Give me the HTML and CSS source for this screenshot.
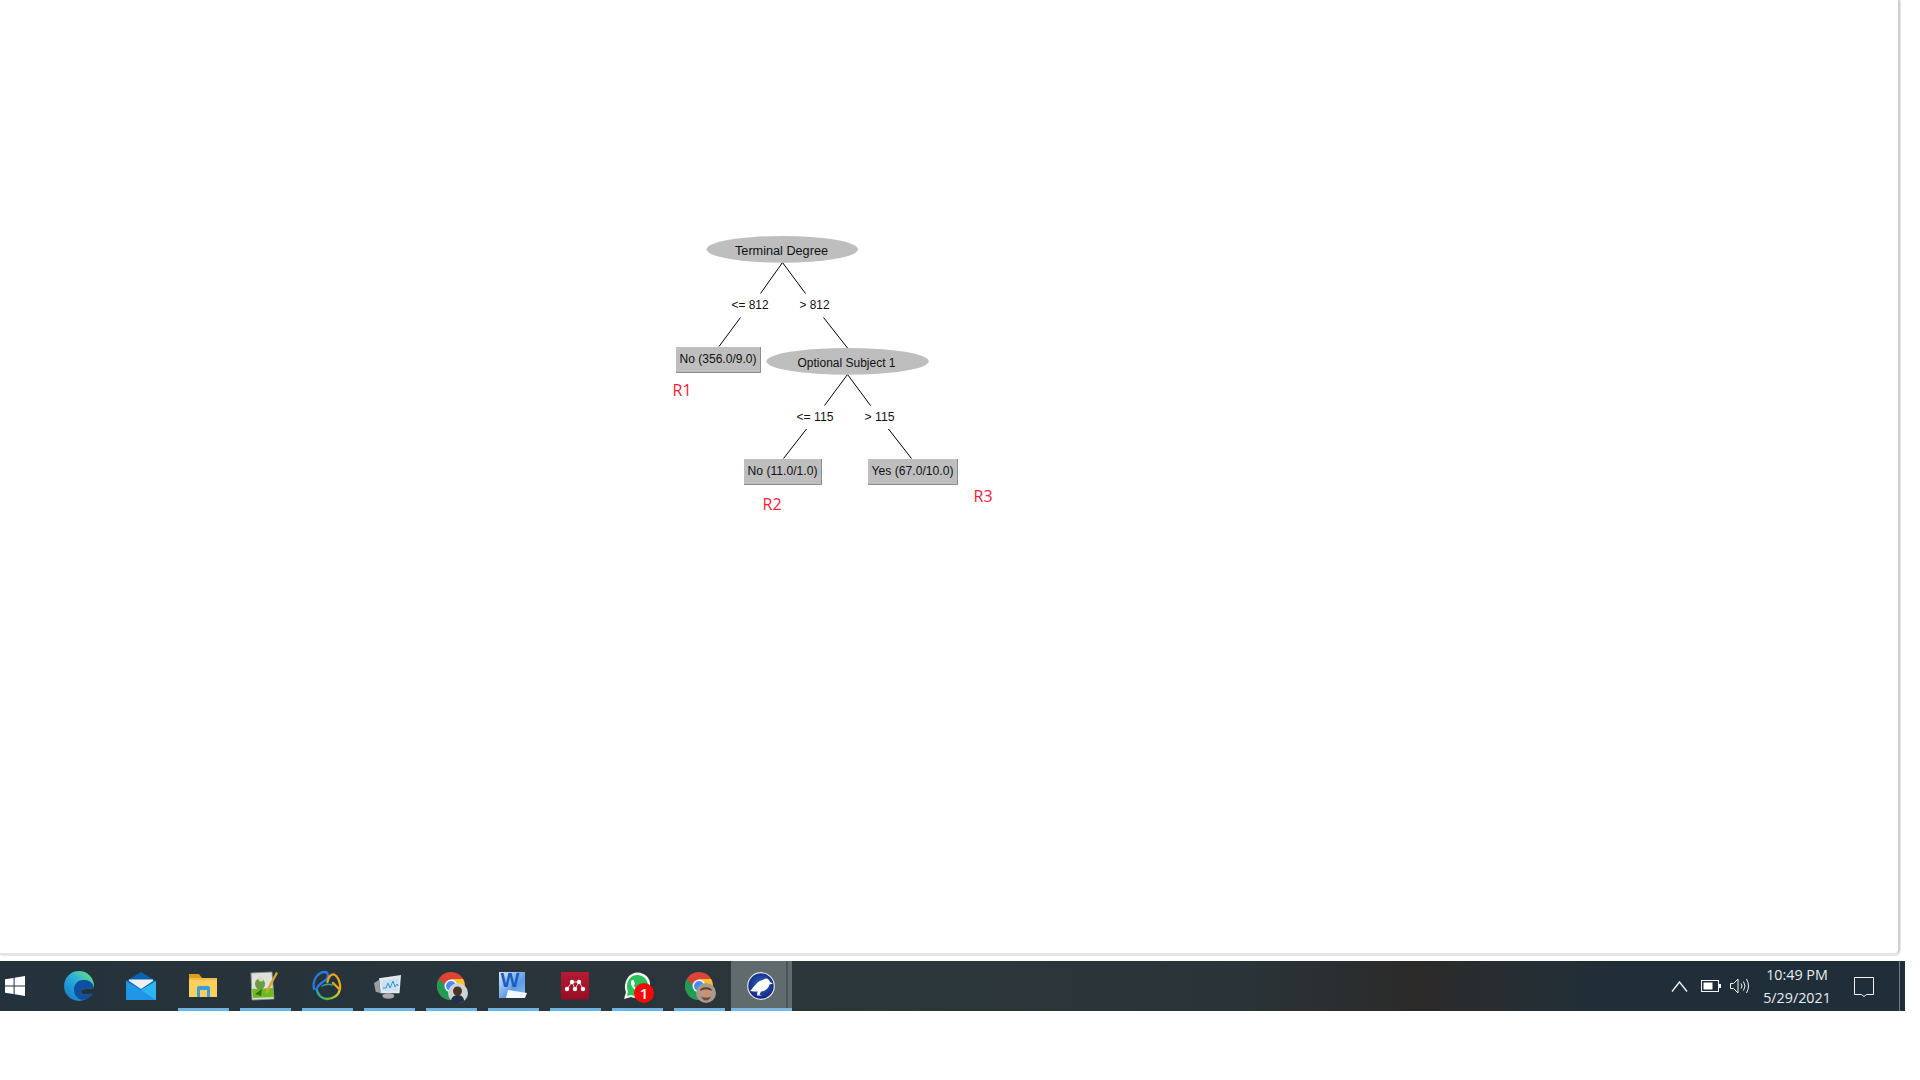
FILE: index.html
```html
<!DOCTYPE html>
<html lang="en">
<head>
<meta charset="utf-8">
<title>J48 tree</title>
<link rel="stylesheet" href="styles.css">
</head>
<body>
<main class="window">
<svg class="tree" width="1898" height="953" viewBox="0 0 1898 953">
  <g class="edges">
    <line x1="782.5" y1="262.5" x2="760.5" y2="293.5"/>
    <line x1="782.5" y1="262.5" x2="805.5" y2="293.5"/>
    <line x1="740.5" y1="317.5" x2="719" y2="346.5"/>
    <line x1="823.5" y1="317.5" x2="847.5" y2="348"/>
    <line x1="847.5" y1="374.5" x2="824.5" y2="405.5"/>
    <line x1="847.5" y1="374.5" x2="870.5" y2="405.5"/>
    <line x1="806.5" y1="429" x2="783.5" y2="458.5"/>
    <line x1="888.5" y1="429" x2="911.5" y2="458.5"/>
  </g>
  <ellipse class="node" cx="782.3" cy="249.3" rx="75.7" ry="13.4"/>
  <ellipse class="node" cx="847.6" cy="361.3" rx="81.2" ry="13.4"/>
  <rect class="node" x="676" y="347" width="85" height="26"/>
  <path class="leaf-edge" d="M676 372.5H760.5V347"/>
  <rect class="node" x="744" y="459" width="78" height="26"/>
  <path class="leaf-edge" d="M744 484.5H821.5V459"/>
  <rect class="node" x="868" y="459" width="90" height="26"/>
  <path class="leaf-edge" d="M868 484.5H957.5V459"/>
  <text class="lbl" x="781.5" y="255" text-anchor="middle" textLength="93" lengthAdjust="spacingAndGlyphs">Terminal Degree</text>
  <text class="lbl" x="750" y="309" text-anchor="middle" textLength="37" lengthAdjust="spacingAndGlyphs">&lt;= 812</text>
  <text class="lbl" x="814.5" y="309" text-anchor="middle" textLength="30" lengthAdjust="spacingAndGlyphs">&gt; 812</text>
  <text class="lbl" x="718" y="363" text-anchor="middle" textLength="77" lengthAdjust="spacingAndGlyphs">No (356.0/9.0)</text>
  <text class="lbl" x="846.5" y="367" text-anchor="middle" textLength="98" lengthAdjust="spacingAndGlyphs">Optional Subject 1</text>
  <text class="lbl" x="815" y="421" text-anchor="middle" textLength="37" lengthAdjust="spacingAndGlyphs">&lt;= 115</text>
  <text class="lbl" x="879.5" y="421" text-anchor="middle" textLength="30" lengthAdjust="spacingAndGlyphs">&gt; 115</text>
  <text class="lbl" x="782.5" y="475" text-anchor="middle" textLength="70" lengthAdjust="spacingAndGlyphs">No (11.0/1.0)</text>
  <text class="lbl" x="912.5" y="475" text-anchor="middle" textLength="82" lengthAdjust="spacingAndGlyphs">Yes (67.0/10.0)</text>
  <text class="region" x="672.5" y="395.5">R1</text>
  <text class="region" x="762.5" y="509.5">R2</text>
  <text class="region" x="973.5" y="501.5">R3</text>
</svg>
</main>

<footer class="taskbar">
  <div class="start">
    <svg width="20" height="20" viewBox="0 0 20 20"><path class="white" d="M0 3.2 8.6 2V9.5H0ZM9.6 1.8 20 0V9.5H9.6ZM0 10.5H8.6V18L0 16.8ZM9.6 10.5H20V20L9.6 18.2Z"/></svg>
  </div>
  <div class="tasks">
    <div class="task pinned">
      <svg class="ico" viewBox="0 0 34 34">
        <defs>
          <linearGradient id="eg" x1="0" y1="1" x2="1" y2="0"><stop offset="0" stop-color="#1274c8"/><stop offset=".55" stop-color="#2ab0dc"/><stop offset="1" stop-color="#7ee368"/></linearGradient>
        </defs>
        <circle cx="17" cy="17" r="15" fill="url(#eg)"/>
        <path d="M32 19C31 13 26 10.500 21 11C15 11.500 11.500 16 12 22C12.500 28 18 32 23.500 30.500C27 29.500 30 27 31.500 24C27 26 22.500 26 20.500 24.500C18.500 23 19 21 21 20.500C25 19.500 29 20 32 19Z" fill="#0e4f9e"/>
        <path d="M32 19C29 20 25 19.500 21 20.500C19 21 18.500 23 20.500 24.500C22.500 26 27 26 31.500 24C32 22 32 20.500 32 19Z" fill="#243139"/>
      </svg>
    </div>
    <div class="task pinned">
      <svg class="ico" viewBox="0 0 34 34">
        <defs><linearGradient id="mg" x1="0" y1="0" x2="1" y2="1"><stop offset="0" stop-color="#1a88dc"/><stop offset="1" stop-color="#33c2f6"/></linearGradient></defs>
        <path d="M2 12 17 3 32 12 17 22Z" fill="#0a62b2"/>
        <path d="M2 12 17 21 32 12V31H2Z" fill="url(#mg)"/>
        <path d="M17 21 32 12V31Z" fill="#2bb6f0"/>
        <path d="M2 12 17 21 32 31H2Z" fill="#1f96e6"/>
        <path d="M5 10.500H29V12L17 20 5 12Z" fill="#eef1f3"/>
      </svg>
    </div>
    <div class="task">
      <svg class="ico" viewBox="0 0 34 34">
        <path d="M3 5H13L16 9H3Z" fill="#dc9e1e"/>
        <rect x="3" y="9" width="28" height="19" fill="#fbcf5e"/>
        <rect x="3" y="9" width="28" height="2" fill="#f3bb3f"/>
        <path d="M11 28V19Q11 17 13 17H22Q24 17 24 19V28H21V21H14V28Z" fill="#3b9cdb"/>
      </svg>
    </div>
    <div class="task">
      <svg class="ico" viewBox="0 0 34 34">
        <path d="M3 4 24 3 26 30 4 31Z" fill="#dfe2dc" stroke="#8d918c" stroke-width=".8"/>
        <path d="M4 20 25 19 26 28 5 29Z" fill="#6dbb22"/>
        <ellipse cx="12" cy="15" rx="5" ry="5.500" fill="#6f9a48"/>
        <circle cx="13" cy="10" r="2.500" fill="#cfe0b8"/>
        <path d="M7 25 14 20 13 27Z" fill="#356f16"/>
        <path d="M28 3 30 4 20 23 17.500 25 18 21.500Z" fill="#d9a52a"/>
      </svg>
    </div>
    <div class="task">
      <svg class="ico" viewBox="0 0 34 34">
        <defs><linearGradient id="ng" x1="0" y1="0" x2="1" y2="0"><stop offset="0" stop-color="#23a8b0"/><stop offset=".5" stop-color="#52c43c"/><stop offset="1" stop-color="#e7c72d"/></linearGradient></defs>
        <g fill="none" stroke-width="2.300" stroke-linecap="round">
          <path d="M6.500 20C7.500 26 12 30 17 30C23 30 29 26 29.500 21" stroke="url(#ng)"/>
          <path d="M4 20C2 11 8 3 14.500 3C19 3 19 9 15 11.500C11 14 8 16 6.500 20" stroke="#2a78e0"/>
          <path d="M17.500 13C18 8 21 5 24 5.500C28 7 31 15 30 20C27 19 25 15 23 14" stroke="#eea21f"/>
          <path d="M12 17C15 15 19 15 23 16" stroke="#2fa59a" stroke-width="1.500"/>
        </g>
      </svg>
    </div>
    <div class="task">
      <svg class="ico" viewBox="0 0 34 34">
        <path d="M2 14 7 11 8.700 24.300 3.700 22.700Z" fill="#9b9fa3"/>
        <path d="M7 9.300 29 6 27.500 24.300 8.700 24.300Z" fill="#e6e8ea"/>
        <path d="M9.500 11.500 27 9 26 22 10.500 22Z" fill="#c6e2f3"/>
        <path class="graph" d="M11 19 14 19 16 14 18 19 21 12 23 18 25 15 26.500 17"/>
        <ellipse cx="16.300" cy="27" rx="6" ry="2.700" fill="#a7abae"/>
      </svg>
    </div>
    <div class="task">
      <svg class="ico" viewBox="0 0 34 34">
        <circle cx="17" cy="17" r="14" fill="#db4437"/>
        <path d="M17 17 4.500 23.500A14 14 0 0 0 17 31L24 19ZM4.500 23.500A14 14 0 0 1 4.900 10L12 17 17 17Z" fill="#1f9d55"/>
        <path d="M17 10H29.100A14 14 0 0 1 17 31L24 19Z" fill="#fbc02d"/>
        <circle cx="17" cy="17" r="6.500" fill="#fff"/>
        <circle cx="17" cy="17" r="5" fill="#4a8af4"/>
        <circle cx="24" cy="24" r="10" fill="#cfd2d2"/>
        <path d="M17 33C17 28 20 26 24 26C28 26 30 29 30 32Q24 36 17 33Z" fill="#232e48"/>
        <circle cx="23.500" cy="22" r="4.500" fill="#4a3327"/>
      </svg>
    </div>
    <div class="task">
      <svg class="ico" viewBox="0 0 34 34">
        <defs><linearGradient id="wg" x1="0" y1="0" x2="1" y2="1"><stop offset="0" stop-color="#dcebfb"/><stop offset=".6" stop-color="#5d9be6"/><stop offset="1" stop-color="#8fbcf0"/></linearGradient></defs>
        <rect x="3" y="3" width="26" height="26" fill="url(#wg)"/>
        <path d="M10 29 12 21 31 24 29 29Z" fill="#f3f6fb"/>
        <text class="word" x="14" y="18" text-anchor="middle">W</text>
      </svg>
    </div>
    <div class="task">
      <svg class="ico" viewBox="0 0 34 34">
        <defs><linearGradient id="dg" x1="0" y1="0" x2="0" y2="1"><stop offset="0" stop-color="#b51c30"/><stop offset="1" stop-color="#980c24"/></linearGradient></defs>
        <rect x="3" y="3" width="28" height="27.500" fill="url(#dg)"/>
        <path class="net" d="M9 20 14 13 17 20 21 13 25 20M14 13H21"/>
        <g class="white">
          <circle cx="9" cy="20" r="2.200"/><circle cx="14" cy="13" r="2.200"/><circle cx="21" cy="13" r="2.200"/><circle cx="25" cy="20" r="2.200"/><circle cx="17" cy="20" r="2.200"/>
        </g>
      </svg>
    </div>
    <div class="task">
      <svg class="ico" viewBox="0 0 34 34">
        <path d="M4 30 6 23C3 16 7 4 17 3.500C26 3.500 31 10 30 17C29 26 19 31 11 28Z" fill="#f4f7f4"/>
        <path d="M7 27 8 22.500C5 15 9 6 17 6C24 6 28 11 28 17C27 24 19 29 11 26Z" fill="#2bc25c"/>
        <path d="M12 11C10 13 11 17 14 20C17 23 20 24 22 22L19.500 19.500 18 20.500C16 20 14.500 18 14 16.500L15 15 13.500 11Z" fill="#fff"/>
        <circle cx="24" cy="24" r="10" fill="#f50a0a"/>
        <text class="badge" x="24" y="29.500" text-anchor="middle">1</text>
      </svg>
    </div>
    <div class="task">
      <svg class="ico" viewBox="0 0 34 34">
        <circle cx="17" cy="17" r="14" fill="#db4437"/>
        <path d="M17 17 4.500 23.500A14 14 0 0 0 17 31L24 19ZM4.500 23.500A14 14 0 0 1 4.900 10L12 17 17 17Z" fill="#1f9d55"/>
        <path d="M17 10H29.100A14 14 0 0 1 17 31L24 19Z" fill="#fbc02d"/>
        <circle cx="17" cy="17" r="6.500" fill="#fff"/>
        <circle cx="17" cy="17" r="5" fill="#4a8af4"/>
        <circle cx="24" cy="24" r="10" fill="#a59a90"/>
        <ellipse cx="24" cy="24.500" rx="6" ry="7.500" fill="#c4957a"/>
        <path d="M18 22C18 17 30 17 30 22C27 20 21 20 18 22Z" fill="#5e4330"/>
        <path d="M19 27C21 33 27 33 29 27C27 29 21 29 19 27Z" fill="#6b4f3c"/>
      </svg>
    </div>
    <div class="task active">
      <svg class="ico" viewBox="0 0 34 34">
        <defs><radialGradient id="bg" cx=".5" cy=".45" r=".55"><stop offset="0" stop-color="#2d6fc0"/><stop offset="1" stop-color="#14207e"/></radialGradient></defs>
        <circle cx="17" cy="17" r="13.300" fill="url(#bg)" stroke="#dfe5ee" stroke-width="1.200"/>
        <path class="white" d="M6 22C10 18 13 12 19 11C22 8.500 25 9.500 26 13L29 14.500 25.500 15.500C24.500 20 20 22.500 17 22.500L15.500 25.500 18 26.500H13L13.500 22.500C11 22.500 8.500 22.500 6 22Z"/>
      </svg>
    </div>
  </div>
  <div class="tray">
    <svg class="chev" width="17" height="11" viewBox="0 0 17 11"><path class="tline thick" d="M1 10.500 8.500 1 16 10.500"/></svg>
    <svg class="batt" width="20" height="12" viewBox="0 0 20 12"><rect class="tline" x=".5" y=".5" width="17" height="11"/><rect class="white" x="2.500" y="2.500" width="9" height="7"/><rect class="white" x="18" y="4" width="2" height="4"/></svg>
    <svg class="vol" width="20" height="18" viewBox="0 0 20 18"><path class="tline" d="M.5 6.500H3.500L8 2V16L3.500 11.500H.5ZM11 6.500Q13 9 11 11.500M13.500 4.500Q16.500 9 13.500 13.500M16.500 2Q20.500 9 16.500 16"/></svg>
    <div class="clock"><span>10:49 PM</span><span>5/29/2021</span></div>
    <svg class="note" width="20" height="20" viewBox="0 0 20 20"><path class="tline" d="M.5 .5H19.500V17.500H12.500L10 19.500 7.500 17.500H.5Z"/></svg>
  </div>
</footer>
</body>
</html>
```
FILE: styles.css
```css
html, body { margin: 0; padding: 0; background: #fff; }
body { width: 1920px; height: 1080px; overflow: hidden; font-family: "Open Sans", sans-serif; }

.window {
  box-sizing: border-box;
  width: 1900px;
  height: 955px;
  margin-bottom: 6px;
  background: #fff;
  border-right: 2px solid #cfcfcf;
  border-bottom: 2px solid #e4e4e4;
  border-bottom-right-radius: 6px;
  box-shadow: 1px 1px 1px #e6e6e6;
}
.tree { display: block; }
.edges line { stroke: #000; stroke-width: 1; }
.node { fill: #bebebe; }
.leaf-edge { fill: none; stroke: #8c8c8c; stroke-width: 1; }
.lbl { font-family: "Liberation Sans", sans-serif; font-size: 12px; fill: #111; }
.region { font-family: "Open Sans", sans-serif; font-size: 16px; fill: #f5203c; }

.taskbar {
  display: flex;
  align-items: stretch;
  width: 1905px;
  height: 50px;
  background: linear-gradient(90deg, #24323b 0, #28343b 400px, #2c373b 900px, #2a3338 1250px, #2c2a29 1420px, #262e33 1520px, #1f2e39 1640px, #1f2e39 100%);
}
.start { width: 48px; display: flex; align-items: center; padding-left: 5px; box-sizing: border-box; }
.white { fill: #fff; }
.tasks { display: flex; }
.task {
  position: relative;
  width: 62px;
  display: flex;
  align-items: center;
  justify-content: center;
}
.task::after {
  content: "";
  position: absolute;
  left: 6px;
  right: 5px;
  bottom: 0;
  height: 3px;
  background: #6cb3e6;
}
.task.pinned::after { display: none; }
.task.active { background: linear-gradient(90deg, #5f6b6d 0, #5f6b6d 55px, #4a5557 55px, #4a5557 57px, #5f6b6d 57px); margin-left: 1px; width: 61px; }
.task.active::after { left: 0; right: 0; background: #7ab5e4; }
.ico { width: 34px; height: 34px; overflow: visible; display: block; }
.active .ico { margin-left: -1px; }
.graph { fill: none; stroke: #3f8fd0; stroke-width: 1; }
.net { fill: none; stroke: #fff; stroke-width: .8; }
.word { font-family: "Liberation Sans", sans-serif; font-weight: 700; font-size: 20px; fill: #1a5cc0; }
.badge { font-family: "Open Sans", sans-serif; font-weight: 600; font-size: 15px; fill: #fff; }

.tray {
  margin-left: auto;
  display: flex;
  align-items: center;
  color: #e9edef;
  border-right: 1px solid #6b8089;
  width: 230px;
  box-sizing: border-box;
  margin-right: 5px;
  padding-right: 2px;
}
.tline { fill: none; stroke: #f2f4f5; stroke-width: 1; }
.thick { stroke-width: 1.4; }
.chev { margin-left: 1px; }
.batt { margin-left: 13px; }
.vol { margin-left: 9px; }
.clock {
  width: 72px;
  margin-left: 11px;
  display: flex;
  flex-direction: column;
  align-items: center;
  gap: 4px;
  font-size: 14.3px;
  line-height: 19px;
  white-space: nowrap;
}
.note { margin-left: 21px; margin-top: 2px; }
```
